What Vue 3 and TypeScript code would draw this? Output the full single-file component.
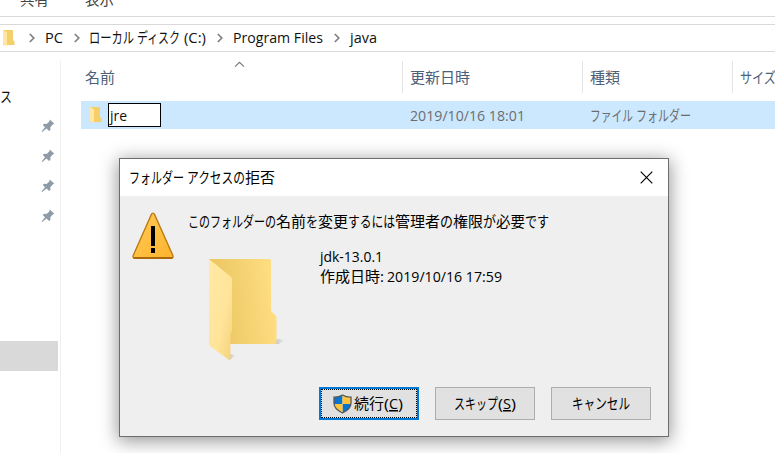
<script setup lang="ts">
import { h, type FunctionalComponent } from 'vue'

// A run is [text, advance width, underlined?]
type Run = [string, number, boolean?]

const Label: FunctionalComponent<{ runs: Run[] }> = (props) => {
  let x = 0
  const nodes = props.runs.map(([text, width, underlined]) => {
    const node = h('text', {
      x,
      y: 15,
      textLength: width,
      lengthAdjust: 'spacingAndGlyphs',
      'text-decoration': underlined ? 'underline' : undefined,
    }, text)
    x += width
    return node
  })
  return h('svg', { width: x, height: 20 }, nodes)
}
Label.props = ['runs']

const tabs: Run[][] = [[['共有', 29]], [['表示', 29]]]
const crumbs: Run[][] = [
  [['PC', 18]],
  [['ローカル', 45], [' ', 3], ['ディスク', 43], [' ', 4], ['(C:)', 22]],
  [['Program Files', 90]],
  [['java', 27]],
]
const columns: { key: string; runs: Run[] }[] = [
  { key: 'name', runs: [['名前', 30]] },
  { key: 'date', runs: [['更新日時', 60]] },
  { key: 'kind', runs: [['種類', 30]] },
  { key: 'size', runs: [['サイズ', 36]] },
]
const modified: Run[] = [['2019/10/16 18:01', 115]]
const kind: Run[] = [['ファイル', 43], [' ', 3], ['フォルダー', 55]]
const title: Run[] = [['フォルダー', 55], [' ', 3], ['アクセスの', 58], ['拒否', 30]]
const message: Run[] = [
  ['このフォルダーの', 88], ['名前', 30], ['を', 12], ['変更', 30], ['するには', 47],
  ['管理者', 45], ['の', 13], ['権限', 30], ['が', 13], ['必要', 29], ['です', 24],
]
const itemName: Run[] = [['jdk-13.0.1', 63]]
const created: Run[] = [['作成日時', 60], [':', 4], [' ', 3], ['2019/10/16 17:59', 115]]
const proceed: Run[] = [['続行', 30], ['(', 5], ['C', 9, true], [')', 5]]
const skip: Run[] = [['スキップ', 44], ['(', 5], ['S', 8, true], [')', 5]]
const cancel: Run[] = [['キャンセル', 58]]
</script>

<template>
  <div class="window">
    <div class="ribbon">
      <Label v-for="(t, i) in tabs" :key="i" :runs="t" />
    </div>
    <div class="address">
      <svg class="folder-small" width="14" height="18" viewBox="0 0 14 18">
        <path d="M1 1h10v10l1.5 1.5V16H1z" fill="#f4cf6b" />
        <path d="M1 1l4 2.5V17.5L1 15z" fill="#ffe8a1" />
      </svg>
      <div v-for="(c, i) in crumbs" :key="i" class="crumb">
        <svg class="chevron" width="6" height="10" viewBox="0 0 6 10">
          <path d="M.8 1l4 4-4 4" fill="none" stroke="#808080" stroke-width="1.7" />
        </svg>
        <Label :runs="c" />
      </div>
    </div>

    <div class="content">
      <nav class="nav">
        <Label class="nav-text" :runs="[['ス', 12]]" />
        <div class="pins">
          <svg v-for="n in 4" :key="n" width="14" height="14" viewBox="0 0 14 14">
            <path d="M8.8.6l4.5 4.2-1.6.7-2.4 2.8.2 2.4-1.4 1.2-2.6-2.5L1.3 13 .6 12.4 4 8.2 1.8 6l1.3-1.2 2.5.1L8.3 2.5z" fill="#8e9ba7" />
          </svg>
        </div>
        <div class="nav-selected"></div>
      </nav>
      <main class="files">
        <div class="columns">
          <div v-for="c in columns" :key="c.key" :class="['column', c.key]">
            <Label :runs="c.runs" />
            <svg v-if="c.key === 'name'" class="sort" width="11" height="7" viewBox="0 0 11 7">
              <path d="M1 5.7l4.5-4.4L10 5.7" fill="none" stroke="#777" stroke-width="1.1" />
            </svg>
          </div>
        </div>
        <div class="row">
          <div class="row-name">
            <svg class="folder-small" width="14" height="18" viewBox="0 0 14 18">
              <path d="M1 1h10v10l1.5 1.5V16H1z" fill="#f4cf6b" />
              <path d="M1 1l4 2.5V17.5L1 15z" fill="#ffe8a1" />
            </svg>
            <div class="rename"><Label :runs="[['jre', 17]]" /></div>
          </div>
          <div class="row-date"><Label :runs="modified" /></div>
          <div class="row-kind"><Label :runs="kind" /></div>
        </div>
      </main>
    </div>

    <section class="dialog">
      <header class="titlebar">
        <Label :runs="title" />
        <svg width="13" height="13" viewBox="0 0 13 13">
          <path d="M.7.7l11.6 11.6M12.3.7L.7 12.3" stroke="#000" stroke-width="1.15" />
        </svg>
      </header>
      <div class="body">
        <svg class="warning" width="42" height="48" viewBox="0 0 42 48">
          <defs>
            <linearGradient id="amber" x2="1" y2="1">
              <stop offset="0" stop-color="#ffca57" />
              <stop offset="1" stop-color="#ffb42d" />
            </linearGradient>
          </defs>
          <path d="M20.9 1.2q1 0 1.6 1.2L40.9 43.5q.7 2.6-1.4 2.8H2.6Q.4 46.1 1.2 43.5L19.4 2.4q.6-1.2 1.5-1.2z" fill="url(#amber)" stroke="#b97812" stroke-width="1.3" />
          <path d="M1.5 45.8h39" stroke="#a9680a" stroke-width="1.7" />
          <path d="M19 14h4v20h-4zM19 36h4v5h-4z" fill="#000" />
        </svg>
        <div class="info">
          <Label :runs="message" />
          <div class="item">
            <svg class="folder-large" width="80" height="106" viewBox="0 0 80 106">
              <defs>
                <linearGradient id="back" x1="0" y1=".35" x2="1" y2=".2">
                  <stop offset="0" stop-color="#eac45f" />
                  <stop offset="1" stop-color="#ffe084" />
                </linearGradient>
                <linearGradient id="front" x1="0" y1="0" x2="1" y2="1">
                  <stop offset="0" stop-color="#ffeaa5" />
                  <stop offset=".6" stop-color="#ffe49a" />
                  <stop offset="1" stop-color="#f5d27a" />
                </linearGradient>
                <linearGradient id="shade" x1="0" x2="1">
                  <stop offset="0" stop-color="#c4c4c4" />
                  <stop offset="1" stop-color="#efefef" />
                </linearGradient>
              </defs>
              <path d="M66 85l2-5q5 0 8 1l-6 4z" fill="url(#shade)" />
              <path d="M20 101v-6l7 1-5 4z" fill="url(#shade)" />
              <path d="M0 0h60q2 0 2 2v50l5.5 5.5V83q0 2-2 2H0z" fill="url(#back)" />
              <path d="M0 0l21 17q2 1 2 3v51q0 2-1.5 3v26q0 1.5-2 .5L2 88q-2-1-2-3z" fill="url(#front)" />
            </svg>
            <div class="details">
              <Label :runs="itemName" />
              <Label :runs="created" />
            </div>
          </div>
        </div>
      </div>
      <footer class="actions">
        <button class="btn primary">
          <svg class="shield" width="19" height="20" viewBox="0 0 19 20">
            <defs>
              <clipPath id="shield-clip">
                <path d="M9.5 1Q13 3.3 18 3.2V9q0 6-8.5 10Q1 15 1 9V3.2Q6 3.3 9.5 1z" />
              </clipPath>
            </defs>
            <g clip-path="url(#shield-clip)">
              <path d="M0 0h9.5v10H0zM9.5 10H19v10H9.5z" fill="#0874cf" />
              <path d="M9.5 0H19v10H9.5zM0 10h9.5v10H0z" fill="#ffc43b" />
            </g>
            <path d="M9.5 1Q13 3.3 18 3.2V9q0 6-8.5 10Q1 15 1 9V3.2Q6 3.3 9.5 1z" fill="none" stroke="#55575a" stroke-width="1.3" />
          </svg>
          <Label :runs="proceed" />
        </button>
        <button class="btn"><Label :runs="skip" /></button>
        <button class="btn"><Label :runs="cancel" /></button>
      </footer>
    </section>
  </div>
</template>

<style>
body { margin: 0; }
svg { display: block; flex: none; overflow: visible; }
svg text { white-space: pre; fill: currentColor; }
</style>

<style scoped>
.window {
  position: relative;
  display: flex;
  flex-direction: column;
  width: 775px;
  height: 453px;
  overflow: hidden;
  box-sizing: border-box;
  background: #fff;
  color: #111;
  font-family: "Open Sans", "Noto Sans CJK JP", sans-serif;
  font-size: 15px;
}
.ribbon {
  display: flex;
  align-items: flex-end;
  gap: 36px;
  height: 17px;
  padding: 0 0 6px 20px;
  box-sizing: border-box;
  border-bottom: 1px solid #d9d9d9;
  color: #444;
}
.address {
  display: flex;
  align-items: center;
  height: 28px;
  margin-top: 7px;
  padding-left: 2px;
  box-sizing: border-box;
  border: solid #d9d9d9;
  border-width: 1px 0;
}
.crumb { display: flex; align-items: center; margin-left: 11px; }
.crumb:nth-of-type(1) { margin-left: 13px; }
.crumb .chevron { margin-right: 9.7px; }
.content { display: flex; flex: 1; min-height: 0; }
.nav {
  width: 60px;
  margin-top: 9px;
  border-right: 1px solid #f0f0f0;
}
.nav-text { margin-top: 26px; }
.pins { display: flex; flex-direction: column; gap: 16px; margin: 12px 0 0 41px; }
.nav-selected { width: 58px; height: 30px; margin-top: 118px; background: #d9d9d9; }
.files { flex: 1; min-width: 0; }
.columns { display: flex; height: 32px; margin-top: 9px; color: #4c607a; }
.column {
  position: relative;
  box-sizing: border-box;
  padding: 7px 0 0 7px;
  border-left: 1px solid #e5e5e5;
}
.column.name { width: 341px; padding-left: 24px; border: 0; }
.column.date, .column.kind { flex: none; }
.column.date { width: 180px; }
.column.kind { width: 150px; }
.column.size { width: 43px; }
.sort { position: absolute; left: 173px; top: 0; }
.row {
  display: flex;
  align-items: center;
  height: 28px;
  margin: 8px 0 0 20px;
  background: #cce8ff;
  color: #6d6d6d;
}
.row-name { display: flex; align-items: center; width: 329px; padding-left: 8px; box-sizing: border-box; }
.row-date { width: 180px; }
.row-date, .row-kind { padding-top: 1px; }
.rename {
  width: 53px;
  height: 24px;
  margin-left: 5px;
  padding: 2px 0 0 1px;
  box-sizing: border-box;
  border: 1px solid #000;
  background: #fff;
  color: #111;
}
.dialog {
  position: absolute;
  left: 119px;
  top: 158px;
  display: flex;
  flex-direction: column;
  width: 550px;
  height: 279px;
  box-sizing: border-box;
  border: 1px solid #6d6d6d;
  background: #efefef;
  color: #000;
  box-shadow: 0 3px 17px 1px rgba(0, 0, 0, 0.42);
}
.titlebar {
  display: flex;
  align-items: center;
  justify-content: space-between;
  height: 37px;
  padding: 0 15px 0 9px;
  background: #fff;
}
.body { display: flex; flex: 1; padding: 16px 0 0 12px; }
.info { margin-left: 14px; }
.item { display: flex; margin-top: 15px; padding-left: 21px; }
.folder-large { margin-top: 12px; }
.details { margin-left: 31px; }
.actions { display: flex; justify-content: flex-end; gap: 16px; padding: 0 17px 16px 0; }
.btn {
  display: flex;
  align-items: center;
  justify-content: center;
  width: 100px;
  height: 33px;
  margin: 0;
  padding: 0;
  box-sizing: border-box;
  border: 1px solid #adadad;
  border-radius: 0;
  background: #e1e1e1;
  color: #000;
  font: inherit;
}
.primary {
  padding-right: 3px;
  border: 2px solid #0078d7;
  outline: 1px dotted #000;
  outline-offset: -3px;
}
.shield { margin-right: 2px; }
</style>
